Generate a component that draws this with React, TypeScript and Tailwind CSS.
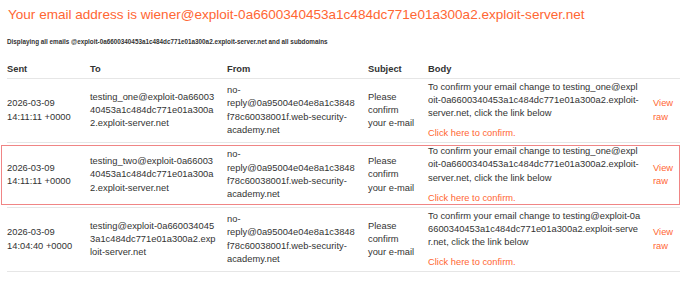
import React from "react";

type Row = {
  sent: string[];
  to: string[];
  from: string[];
  subject: string[];
  body: string[];
  highlight?: boolean;
};

const rows: Row[] = [
  {
    sent: ["2026-03-09", "14:11:11 +0000"],
    to: ["testing_one@exploit-0a66003", "40453a1c484dc771e01a300a", "2.exploit-server.net"],
    from: ["no-", "reply@0a95004e04e8a1c3848", "f78c60038001f.web-security-", "academy.net"],
    subject: ["Please", "confirm", "your e-mail"],
    body: [
      "To confirm your email change to testing_one@expl",
      "oit-0a6600340453a1c484dc771e01a300a2.exploit-",
      "server.net, click the link below",
    ],
  },
  {
    sent: ["2026-03-09", "14:11:11 +0000"],
    to: ["testing_two@exploit-0a66003", "40453a1c484dc771e01a300a", "2.exploit-server.net"],
    from: ["no-", "reply@0a95004e04e8a1c3848", "f78c60038001f.web-security-", "academy.net"],
    subject: ["Please", "confirm", "your e-mail"],
    body: [
      "To confirm your email change to testing_one@expl",
      "oit-0a6600340453a1c484dc771e01a300a2.exploit-",
      "server.net, click the link below",
    ],
    highlight: true,
  },
  {
    sent: ["2026-03-09", "14:04:40 +0000"],
    to: ["testing@exploit-0a660034045", "3a1c484dc771e01a300a2.exp", "loit-server.net"],
    from: ["no-", "reply@0a95004e04e8a1c3848", "f78c60038001f.web-security-", "academy.net"],
    subject: ["Please", "confirm", "your e-mail"],
    body: [
      "To confirm your email change to testing@exploit-0a",
      "6600340453a1c484dc771e01a300a2.exploit-serve",
      "r.net, click the link below",
    ],
  },
];

function Lines({ lines }: { lines: string[] }) {
  return (
    <div className="flex flex-col">
      {lines.map((l, i) => (
        <span key={i} className="block whitespace-nowrap">
          {l}
        </span>
      ))}
    </div>
  );
}

function Cells({ r }: { r: Row }) {
  return (
    <>
      <div className="w-[83px] shrink-0">
        <Lines lines={r.sent} />
      </div>
      <div className="w-[137px] shrink-0">
        <Lines lines={r.to} />
      </div>
      <div className="w-[141px] shrink-0">
        <Lines lines={r.from} />
      </div>
      <div className="w-[60px] shrink-0">
        <Lines lines={r.subject} />
      </div>
      <div className="w-[225px] shrink-0">
        <Lines lines={r.body} />
        <a className="mt-[6.67px] block whitespace-nowrap text-[#ff6633]">Click here to confirm.</a>
      </div>
      <div className="w-[27px] shrink-0 text-[#ff6633]">
        <span className="block">View</span>
        <span className="block">raw</span>
      </div>
    </>
  );
}

export default function App() {
  return (
    <div
      className="w-[700px] h-[288px] overflow-hidden bg-white pl-[7px] text-[#333333]"
      style={{ fontFamily: '"Liberation Sans", Arial, Helvetica, sans-serif' }}
    >
      <h1 className="pt-[5px] pl-[1px] text-[13.56px] leading-[20px] font-normal text-[#ff6633] whitespace-nowrap">
        Your email address is wiener@exploit-0a6600340453a1c484dc771e01a300a2.exploit-server.net
      </h1>
      <p className="mt-[12px] text-[6.33px] leading-[10px] font-bold text-[#333333] whitespace-nowrap">
        Displaying all emails @exploit-0a6600340453a1c484dc771e01a300a2.exploit-server.net and all subdomains
      </p>
      <div className="mt-[16px] w-[673px] text-[9.33px] leading-[13.33px]">
        <div className="flex h-[16px] items-start border-b border-[#e6e6e6] font-bold">
          <div className="w-[83px] shrink-0">Sent</div>
          <div className="w-[137px] shrink-0">To</div>
          <div className="w-[141px] shrink-0">From</div>
          <div className="w-[60px] shrink-0">Subject</div>
          <div className="w-[225px] shrink-0">Body</div>
          <div className="w-[27px] shrink-0" />
        </div>
        {rows.map((r, i) =>
          r.highlight ? (
            <div key={i} className="h-[65px] border-b border-[#e6e6e6] py-[2px]">
              <div className="-ml-[6px] flex h-[60px] items-center border border-[#f08585] pl-[5px]">
                <Cells r={r} />
              </div>
            </div>
          ) : (
            <div key={i} className="flex h-[64px] items-center border-b border-[#e6e6e6]">
              <Cells r={r} />
            </div>
          )
        )}
      </div>
    </div>
  );
}
